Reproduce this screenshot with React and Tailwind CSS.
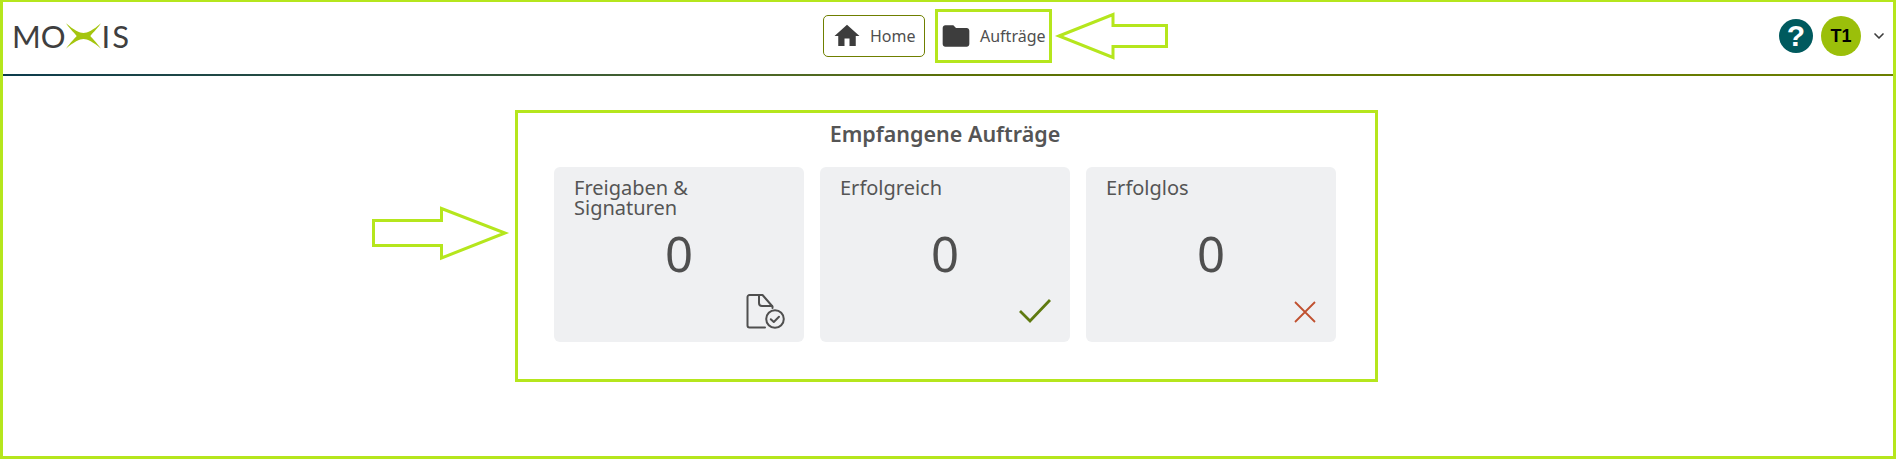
import React from 'react';
import { ChevronDown } from 'lucide-react';
import { MdHome, MdFolder } from 'react-icons/md';

const cards = [
  { id: 1, label: 'Freigaben & Signaturen', value: 0, icon: 'doc' },
  { id: 2, label: 'Erfolgreich', value: 0, icon: 'check' },
  { id: 3, label: 'Erfolglos', value: 0, icon: 'cross' },
];

const DocIcon = () => (
  <svg width="40" height="36" viewBox="0 0 40 36" fill="none" stroke="#4f4f4f" strokeWidth="2" strokeLinejoin="round" strokeLinecap="round" className="-mr-[1px]">
    <path d="M20 33.500H4.500a2 2 0 0 1-2-2V3a2 2 0 0 1 2-2h13l10 11.500v1.500" />
    <path d="M14 1v8a3 3 0 0 0 3 3h10" />
    <circle cx="30" cy="25" r="8.800" />
    <path d="M25.800 25.200l3 2.800 5.200-5.200" />
  </svg>
);

const CheckIcon = () => (
  <svg width="32" height="24" viewBox="0 0 32 24" fill="none" stroke="#5f7a10" strokeWidth="2.800" className="mb-[7px] -mr-[1px]">
    <path d="M1 12l10 10L31 1" />
  </svg>
);

const CrossIcon = () => (
  <svg width="22" height="22" viewBox="0 0 22 22" fill="none" stroke="#c0502f" strokeWidth="1.800" className="mb-[7px]">
    <path d="M1 1l20 20M21 1L1 21" />
  </svg>
);

const cardIcons = { doc: <DocIcon />, check: <CheckIcon />, cross: <CrossIcon /> };

const Card = ({ label, value, icon }) => (
  <div className="h-[175px] rounded-md bg-[#eff0f2] flex flex-col">
    <div className="h-[59px] px-5 pt-[11px] text-[20px] leading-[20px] text-[#555555]">{label}</div>
    <div className="text-center text-[49px] leading-[54px] text-[#4f4f4f]">{value}</div>
    <div className="flex-1 flex items-end justify-end pr-5 pb-[12px]">{cardIcons[icon]}</div>
  </div>
);

export default function App() {
  return (
    <div className="relative h-[459px] border-x-[3px] border-t-2 border-b-[3px] border-[#b5e61d] bg-white font-['Noto_Sans',sans-serif] text-[#4f4f4f] overflow-hidden">
      {/* Top bar */}
      <header className="h-[68px] mb-[4px] flex items-center">
        <div className="w-[820px] pl-[9px] flex items-center text-[31px] leading-none font-['Lato',sans-serif] text-[#3f3f3f]">
          <span>MO</span>
          <svg width="35" height="26" viewBox="0 0 36 26">
            <path d="M0 0C8 7 14 10 18 10C22 10 28 7 36 0C31 7 27 10.500 25 13C27 15.500 31 19 36 26C28 19 22 16 18 16C14 16 8 19 0 26C5 19 9 15.500 11 13C9 10.500 5 7 0 0Z" fill="#a4c50f" />
          </svg>
          <span className="ml-[1px] tracking-[2px]">IS</span>
        </div>

        <nav className="flex items-center gap-[10px] text-[16px]">
          <a className="w-[102px] h-[42px] flex items-center gap-[8px] pl-[8px] border border-[#6f7f00] rounded-[5px]">
            <MdHome size={30} className="text-[#3d3d3d]" />
            <span>Home</span>
          </a>
          <a className="w-[117px] h-[54px] flex items-center gap-[8px] pl-[2px] border-[3px] border-[#b5e61d]">
            <MdFolder size={32} className="text-[#3d3d3d]" />
            <span>Aufträge</span>
          </a>
        </nav>

        <div className="flex-1 flex items-center justify-end pr-[6px]">
          <div className="w-[34px] h-[34px] rounded-full bg-[#005a5e] text-white text-[30px] font-bold leading-none flex items-center justify-center font-['Liberation_Sans',sans-serif]">?</div>
          <div className="ml-2 w-10 h-10 rounded-full bg-[#9bbf0a] text-black text-[18px] font-bold flex items-center justify-center font-['Liberation_Sans',sans-serif]">T1</div>
          <ChevronDown size={16} strokeWidth={2.500} className="ml-[10px] text-[#3d3d3d]" />
        </div>
      </header>
      <div className="h-[2px] bg-gradient-to-r from-[#0c3c4c] via-[#5a7005] via-50% to-[#6b7f00]" />

      {/* Received orders */}
      <main className="pl-[512px] pt-[34px]">
        <section className="w-[863px] h-[272px] border-[3px] border-[#b5e61d] pl-[36px]">
          <h2 className="w-[782px] pt-[6px] h-[54px] text-center text-[21.500px] leading-[30px] font-semibold text-[#555555]">Empfangene Aufträge</h2>
          <div className="w-[782px] grid grid-cols-3 gap-4">
            {cards.map((card) => (
              <Card key={card.id} {...card} />
            ))}
          </div>
        </section>
      </main>

      {/* Annotation arrows */}
      <svg className="absolute left-[1050px] top-[9px]" width="118" height="50" viewBox="0 0 118 50" fill="none" stroke="#b5e61d" strokeWidth="3" strokeMiterlimit="10">
        <path d="M6 25L60 3.500V14.500H113.500V35.500H60V46.500Z" />
      </svg>
      <svg className="absolute left-[367px] top-[203px]" width="142" height="58" viewBox="0 0 142 58" fill="none" stroke="#b5e61d" strokeWidth="3" strokeMiterlimit="10">
        <path d="M3.500 15.500H71.500V3.500L135 28L71.500 53V40.500H3.500Z" />
      </svg>
    </div>
  );
}
